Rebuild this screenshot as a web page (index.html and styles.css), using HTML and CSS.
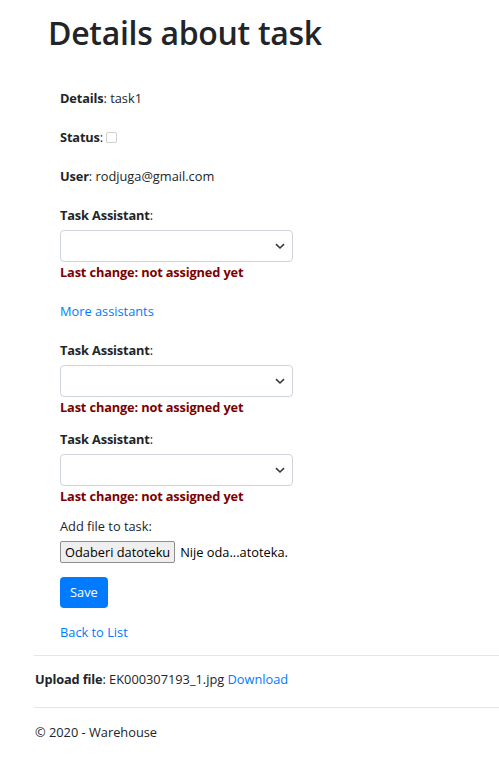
FILE: index.html
```html
<!DOCTYPE html>
<html>
<head>
<meta charset="utf-8">
<link rel="stylesheet" href="styles.css">
</head>
<body>
<div class="container">
  <h1 class="title">Details about task</h1>
  <div class="details">
    <div class="row r-first"><b>Details</b>: task1</div>
    <div class="row r-gap"><b>Status</b>: <span class="check"></span></div>
    <div class="row r-gap"><b>User</b>: rodjuga@gmail.com</div>

    <div class="group r-gap">
      <div class="row"><b>Task Assistant</b>:</div>
      <div class="select"><svg class="chev" width="10" height="7" viewBox="0 0 10 7"><path d="M1 1.2 L5 5 L9 1.2" fill="none" stroke="#343a40" stroke-width="1.6"/></svg></div>
      <div class="row warn">Last change: not assigned yet</div>
    </div>

    <div class="row r-gap"><a href="#">More assistants</a></div>

    <div class="group r-gap">
      <div class="row"><b>Task Assistant</b>:</div>
      <div class="select"><svg class="chev" width="10" height="7" viewBox="0 0 10 7"><path d="M1 1.2 L5 5 L9 1.2" fill="none" stroke="#343a40" stroke-width="1.6"/></svg></div>
      <div class="row warn">Last change: not assigned yet</div>
    </div>

    <div class="group r-small">
      <div class="row"><b>Task Assistant</b>:</div>
      <div class="select"><svg class="chev" width="10" height="7" viewBox="0 0 10 7"><path d="M1 1.2 L5 5 L9 1.2" fill="none" stroke="#343a40" stroke-width="1.6"/></svg></div>
      <div class="row warn">Last change: not assigned yet</div>
    </div>

    <div class="row r-file">Add file to task:</div>
    <div class="file"><span class="file-btn">Odaberi datoteku</span><span class="file-name">Nije oda...atoteka.</span></div>
    <div class="save-wrap"><span class="btn">Save</span></div>
    <div class="row back"><a href="#">Back to List</a></div>
  </div>
  <hr class="sep sep1">
  <div class="row upload"><b>Upload file</b>: EK000307193_1.jpg <a href="#">Download</a></div>
  <hr class="sep sep2">
  <footer class="row footer">© 2020 - Warehouse</footer>
</div>
</body>
</html>
```

FILE: styles.css
```css
html, body {
  margin: 0;
  padding: 0;
  background: #fff;
}
body {
  font-family: "Open Sans", "Noto Sans", sans-serif;
  font-size: 12.8px;
  line-height: 20px;
  color: #212529;
}
.container {
  padding-left: 34px;
}
.title {
  margin: 13px 0 0 14px;
  font-size: 32px;
  line-height: 40px;
  font-weight: 600;
  letter-spacing: -0.3px;
}
.details {
  padding-left: 26px;
}
.row b { font-weight: 700; letter-spacing: -0.15px; }
.r-first { margin-top: 35px; }
.r-gap { margin-top: 19px; }
.r-small { margin-top: 12px; }
.r-file { margin-top: 10px; }
a { color: #007bff; text-decoration: none; }
.check {
  display: inline-block;
  width: 9px;
  height: 9px;
  border: 1px solid #d0d0d0;
  border-radius: 2px;
  vertical-align: -1px;
}
.select {
  margin-top: 5px;
  width: 233px;
  height: 32px;
  box-sizing: border-box;
  border: 1px solid #ced4da;
  border-radius: 4px;
  display: flex;
  align-items: center;
  justify-content: flex-end;
  padding-right: 7px;
}
.warn {
  color: #7b0000;
  font-weight: 700;
  letter-spacing: -0.15px;
}
.file {
  margin-top: 5px;
  display: flex;
  align-items: center;
  height: 22px;
}
.file-btn {
  box-sizing: border-box;
  height: 22px;
  padding: 0 4px;
  border: 1px solid #8f8f8f;
  border-radius: 2px;
  background: #efefef;
  color: #000;
  line-height: 20px;
}
.file-name {
  margin-left: 5px;
  color: #000;
}
.save-wrap { margin-top: 14px; }
.btn {
  display: inline-block;
  background: #007bff;
  color: #fff;
  height: 31px;
  line-height: 31px;
  padding: 0 10px;
  border-radius: 4px;
}
.back { margin-top: 14px; }
.sep {
  border: 0;
  border-top: 1px solid #e5e5e5;
  margin: 0;
}
.sep1 { margin-top: 13px; }
.upload { margin-top: 13px; padding-left: 1px; }
.sep2 { margin-top: 18px; }
.footer { margin-top: 14px; padding-left: 1px; display: block; }
```
